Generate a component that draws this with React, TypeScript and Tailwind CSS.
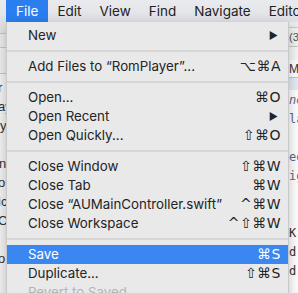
import React from 'react';

type Item =
  | { sep: true }
  | { label: string; key?: string; sub?: boolean; active?: boolean; disabled?: boolean };

const items: Item[] = [
  { label: 'New', sub: true },
  { sep: true },
  { label: 'Add Files to \u201CRomPlayer\u201D...', key: '\u2325\u2318A' },
  { sep: true },
  { label: 'Open...', key: '\u2318O' },
  { label: 'Open Recent', sub: true },
  { label: 'Open Quickly...', key: '\u21E7\u2318O' },
  { sep: true },
  { label: 'Close Window', key: '\u21E7\u2318W' },
  { label: 'Close Tab', key: '\u2318W' },
  { label: 'Close \u201CAUMainController.swift\u201D', key: '^\u2318W' },
  { label: 'Close Workspace', key: '^\u21E7\u2318W' },
  { sep: true },
  { label: 'Save', key: '\u2318S', active: true },
  { label: 'Duplicate...', key: '\u21E7\u2318S' },
  { label: 'Revert to Saved', disabled: true },
];

const menus = ['File', 'Edit', 'View', 'Find', 'Navigate', 'Editor'];

// editor fragments peeking out on both sides of the menu
function Backdrop() {
  return (
    <div className="absolute inset-0 top-[22px] flex justify-between font-['DejaVu_Sans_Mono',monospace] text-[12px] text-[#333]">
      <div className="w-[8px] h-full bg-[#f4f4f4] border-r border-[#cfcfcf] relative overflow-hidden">
        <div className="h-[12px] bg-[#e2e2e2] border-b border-[#c8c8c8]" />
        <div className="h-[14px] bg-[#ececec] border-b border-[#c8c8c8]" />
        <div className="h-[26px] bg-[#f0f0f0] border-b border-[#c8c8c8]" />
        <div className="flex flex-col leading-[19px] pt-[4px] pl-[1px] font-['Liberation_Sans',sans-serif] text-[13px] whitespace-nowrap">
          <span className="-ml-[3px]">r</span>
          <span className="-ml-[3px]">ay</span>
          <span className="-ml-[1px]">y</span>
          <span>&nbsp;</span>
          <span className="-ml-[2px]">n</span>
          <span className="-ml-[3px]">or</span>
          <span className="-ml-[3px]">ic</span>
          <span className="-ml-[3px]">C</span>
          <span>&nbsp;</span>
          <span className="-ml-[3px]">o</span>
        </div>
      </div>
      <div className="w-[10px] h-full bg-white border-l border-[#d0d0d0] overflow-hidden whitespace-nowrap">
        <div className="h-[6px] bg-[#ececec] border-b border-[#c8c8c8]" />
        <div className="h-[19px] leading-[19px] bg-[#f2f2f2] border-b border-[#c8c8c8] text-[11px] font-['Liberation_Sans',sans-serif] text-[#555]">(3</div>
        <div className="h-[13px] bg-[#f6f6f6]" />
        <div className="h-[18px] leading-[18px] text-[12px] font-['Liberation_Sans',sans-serif] border-b border-[#c8c8c8]">Ma</div>
        <div className="h-[12px] bg-[#e3ecf7]" />
        <div className="leading-[19px] pt-[1px]">
          <div className="italic text-[#5a6a90]">ne</div>
          <div className="text-[#5a6a90]">la</div>
          <div>&nbsp;</div>
          <div className="text-[#5a6a90]">ed</div>
          <div className="text-[#5a6a90]">ig</div>
          <div>&nbsp;</div>
          <div>&nbsp;</div>
          <div>K:</div>
          <div>d:</div>
          <div>d:</div>
        </div>
      </div>
    </div>
  );
}

export default function App() {
  return (
    <div className="relative w-[298px] h-[293px] overflow-hidden bg-white font-['Inter',sans-serif]">
      <Backdrop />

      {/* menu bar */}
      <div className="relative h-[22px] flex items-stretch bg-gradient-to-b from-[#eaebee] to-[#dfe1e6] text-[13.5px] text-[#222] whitespace-nowrap pl-[6px]">
        {menus.map((m, i) => (
          <div
            key={m}
            className={
              i === 0
                ? 'flex items-center px-[10px] bg-[#2b7ef0] text-white'
                : 'flex items-center px-[9px]'
            }
          >
            {m}
          </div>
        ))}
      </div>

      {/* File menu */}
      <div className="absolute left-[6px] top-[22px] w-[283px] bg-[#e9e9ea] border-x border-[#c9c9c9] shadow-[0_4px_12px_rgba(0,0,0,0.25)] pt-[4px] text-[13.3px] text-[#242424]">
        {items.map((it, i) =>
          'sep' in it ? (
            <div key={i} className="h-[12px] flex items-center">
              <div className="w-full h-[2px] bg-[#d6d6d7]" />
            </div>
          ) : (
            <div
              key={i}
              className={
                'h-[19px] flex items-center justify-between pl-[21px] pr-[7px] ' +
                (it.active ? 'bg-[#3b87f1] text-white' : '') +
                (it.disabled ? ' text-[#b4b4b4]' : '')
              }
            >
              <span>{it.label}</span>
              {it.key && (
                <span className="font-['DejaVu_Sans',sans-serif] text-[14px] tracking-[0.5px]">{it.key}</span>
              )}
              {it.sub && <span className="text-[10px] pr-[3px]">{'\u25B6'}</span>}
            </div>
          )
        )}
      </div>
    </div>
  );
}
